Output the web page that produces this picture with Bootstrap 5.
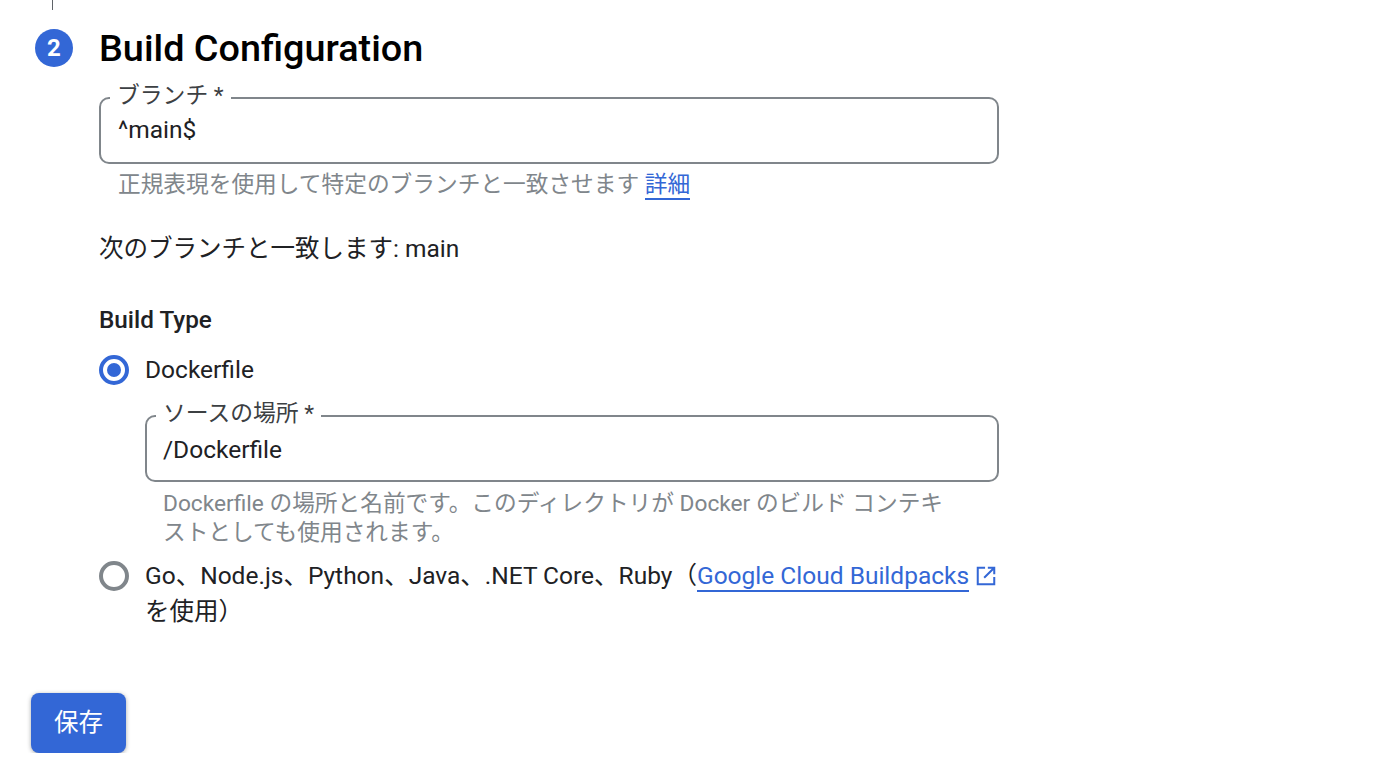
<!DOCTYPE html>
<html lang="ja">
<head>
<meta charset="utf-8">
<title>Build Configuration</title>
<link href="https://cdn.jsdelivr.net/npm/bootstrap@5.3.0/dist/css/bootstrap.min.css" rel="stylesheet">
<style>
html,body{height:100%;overflow:hidden;background:#fff}
body{font-family:Roboto,"Noto Sans CJK JP",sans-serif;color:#202124;font-size:24.5px}
.viewport-clip{height:753px;overflow:hidden;padding:0 0 0 31px}
.top-tick{width:1px;height:10px;background:#5f6368;margin-left:21px}
.step-num{width:38px;height:38px;background:#3367d6;color:#fff;font-size:24px;font-weight:700;line-height:38px;text-align:center;margin-left:4px;flex:none}
.step-title{font-size:37.8px;font-weight:500;line-height:38px;color:#000;margin:0 0 0 26px}
.step-head{margin-top:19px}
.step-body{margin-left:68px;width:900px}
.outlined{position:relative;margin-top:30px;height:67px;border:2px solid #80868b;border-radius:10px;padding:0 17px;display:flex;align-items:center;line-height:1;color:#202124;background:#fff}
.float-label{position:absolute;left:9px;top:-17.5px;background:#fff;padding:0 7px;font-size:22.8px;line-height:28px;color:#3c4043}
.helper{font-size:22.7px;line-height:29px;color:#80868b;padding-left:19px;margin-top:6px}
.helper a,.radio-text a{color:#3367d6;text-decoration:none;border-bottom:2px solid #3367d6}
.match{line-height:32px;margin-top:34px}
.type-title{font-size:24.3px;font-weight:500;line-height:32px;margin-top:39px;color:#202124}
.radio-ring{width:30px;height:30px;border-radius:50%;border:4px solid #80868b;flex:none;background:#fff}
.radio-ring.on{border-color:#3367d6;display:flex;align-items:center;justify-content:center}
.radio-ring.on::after{content:"";width:14px;height:14px;border-radius:50%;background:#3367d6}
.radio-row{gap:16px;margin-top:16px}
.radio-row.lang{margin-top:11px}
.radio-row.lang .radio-ring{margin-top:3px}
.radio-text{line-height:36px}
.nested{margin-left:46px}
.nested .outlined{margin-top:27px;padding:3px 16px 0}
.nested .helper{width:800px;margin-top:7px;padding-left:18px}
.ext-icon{width:22px;height:22px;vertical-align:-3px;margin-left:6px}
.save-btn{margin-top:63px;width:95px;height:60px;background:#3367d6;border:0;border-radius:8px;color:#fff;font-size:24.5px;box-shadow:0 1px 4px rgba(60,64,67,.45);padding:0}
</style>
</head>
<body>
<div class="viewport-clip">
  <div class="top-tick"></div>
  <div class="d-flex align-items-center step-head">
    <div class="step-num rounded-circle">2</div>
    <h1 class="step-title">Build Configuration</h1>
  </div>
  <div class="step-body">
    <div class="outlined">
      <label class="float-label">ブランチ *</label>
      <span>^main$</span>
    </div>
    <div class="helper">正規表現を使用して特定のブランチと一致させます <a href="#">詳細</a></div>
    <div class="match">次のブランチと一致します: main</div>
    <div class="type-title">Build Type</div>
    <div class="d-flex align-items-center radio-row">
      <div class="radio-ring on"></div>
      <div class="radio-text">Dockerfile</div>
    </div>
    <div class="nested">
      <div class="outlined">
        <label class="float-label">ソースの場所 *</label>
        <span>/Dockerfile</span>
      </div>
      <div class="helper">Dockerfile の場所と名前です。このディレクトリが Docker のビルド コンテキストとしても使用されます。</div>
    </div>
    <div class="d-flex align-items-start radio-row lang">
      <div class="radio-ring"></div>
      <div class="radio-text">Go、Node.js、Python、Java、.NET Core、Ruby（<a href="#">Google Cloud Buildpacks</a><svg class="ext-icon" viewBox="0 0 24 24" fill="none" stroke="#3367d6" stroke-width="2.2"><path d="M11 3H3v18h18v-8"/><path d="M14 3h7v7M21 3 10 14"/></svg> を使用）</div>
    </div>
  </div>
  <button class="save-btn" type="button">保存</button>
</div>
<script src="https://cdn.jsdelivr.net/npm/bootstrap@5.3.0/dist/js/bootstrap.bundle.min.js"></script>
</body>
</html>
